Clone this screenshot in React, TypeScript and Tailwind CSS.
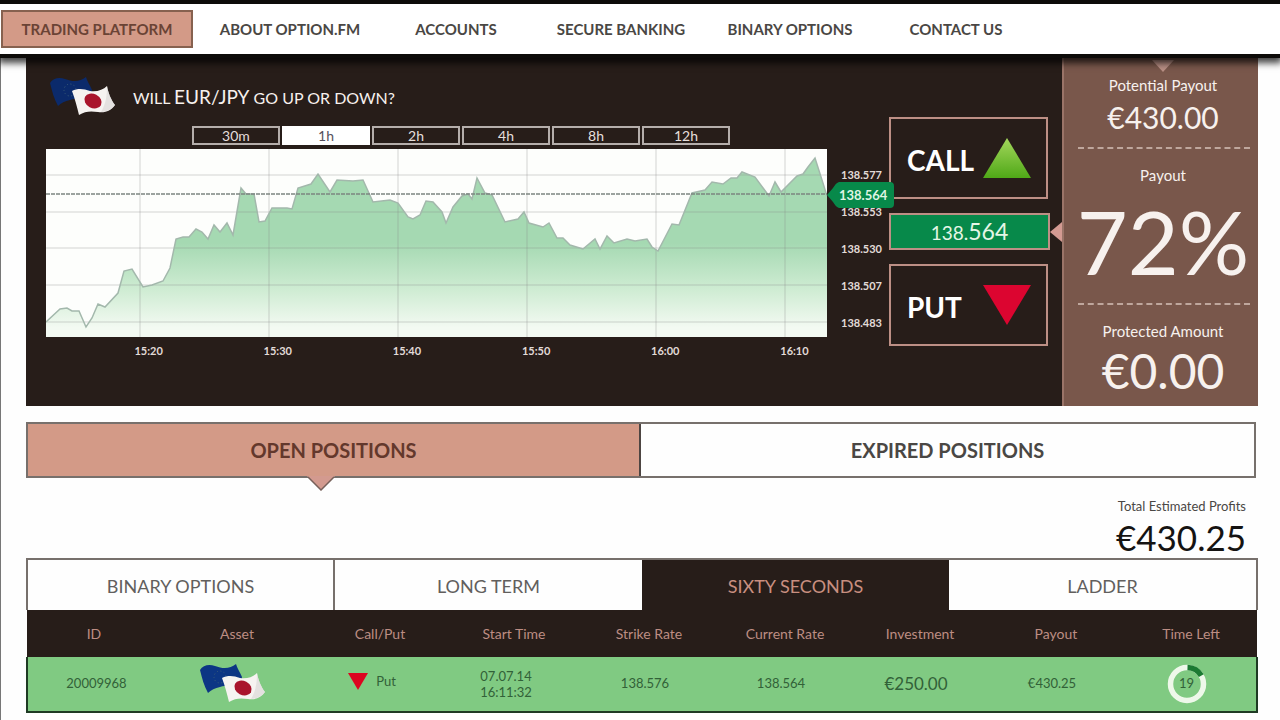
import React, { useState } from 'react';
import clsx from 'clsx';

const NAV_ITEMS = [
    { label: 'TRADING PLATFORM', className: 'w-[192px]' },
    { label: 'ABOUT OPTION.FM', className: 'w-[194px]' },
    { label: 'ACCOUNTS', className: 'w-[138px]' },
    { label: 'SECURE BANKING', className: 'w-[192px]' },
    { label: 'BINARY OPTIONS', className: 'w-[146px]' },
    { label: 'CONTACT US', className: 'w-[186px]' },
];

const TIMEFRAMES = ['30m', '1h', '2h', '4h', '8h', '12h'];
const TIME_LABELS = ['15:20', '15:30', '15:40', '15:50', '16:00', '16:10'];
const PRICE_LABELS = ['138.577', '138.553', '138.530', '138.507', '138.483'];
const TABLE_TABS = ['BINARY OPTIONS', 'LONG TERM', 'SIXTY SECONDS', 'LADDER'];

const COLUMNS = [
    { label: 'ID', className: 'w-[134px]' },
    { label: 'Asset', className: 'w-[152px]' },
    { label: 'Call/Put', className: 'w-[134px]' },
    { label: 'Start Time', className: 'w-[134px]' },
    { label: 'Strike Rate', className: 'w-[136px]' },
    { label: 'Current Rate', className: 'w-[136px]' },
    { label: 'Investment', className: 'w-[134px]' },
    { label: 'Payout', className: 'w-[138px]' },
    { label: 'Time Left', className: 'w-[132px]' },
];

const RATE_LINE =
    '0,173 14,160 21,159 26,162 33,162 40,178 46,169 52,155 59,158 72,144 78,122 86,120 97,138 106,136 117,132 124,119 ' +
    '130,90 137,88 143,88 150,80 156,83 162,90 168,76 174,83 181,74 187,86 195,39 200,45 208,45 213,73 219,72 226,59 ' +
    '241,59 246,60 252,39 265,35 272,25 284,43 291,31 307,32 317,31 322,42 327,53 344,51 352,54 362,68 367,70 374,66 ' +
    '380,52 387,53 396,63 400,74 407,58 416,47 422,45 426,50 431,29 439,44 446,46 459,73 472,70 478,63 483,74 497,78 ' +
    '503,74 511,89 517,89 524,96 537,100 549,90 554,100 561,87 568,94 581,90 589,92 601,90 606,98 612,102 626,75 ' +
    '633,76 646,44 659,41 666,33 677,35 685,29 691,29 696,23 709,28 723,47 729,33 735,43 751,27 757,25 762,18 769,9 ' +
    '776,31 781,47';

const FlagPair: React.FC<{ dim?: boolean }> = ({ dim = false }) => (
    <svg width="66" height="40" viewBox="0 0 66 40" aria-hidden="true">
        <path
            d="M0 6C3 1 9 0 15 2C23 5 30 5 36 0C37 4 40 8 42 13L40 23C33 21 26 21 20 23C15 24 11 26 8 29C4 22 2 14 0 6Z"
            fill={dim ? '#0b2a6b' : '#0c3684'}
        />
        <circle cx="20" cy="13" r="6" fill="none" stroke="#3d5f78" strokeWidth="1" strokeDasharray="1 2.5" />
        <path
            d="M22 14C28 11 34 12 40 14C47 15 53 13 57 9C58 15 61 23 65 28C61 34 55 36 48 35C41 34 35 34 29 38C27 30 25 22 22 14Z"
            fill="#f6f3f1"
        />
        <path d="M57 9C58 15 61 23 65 28C61 33 56 35 51 35C56 27 57 18 57 9Z" fill="#d9d6d6" opacity="0.6" />
        <ellipse cx="43" cy="24" rx="9" ry="7" transform="rotate(28 43 24)" fill="#a9142c" />
    </svg>
);

const RateChart = () => (
    <svg className="block h-[188px] w-full bg-[#fdfefc]" viewBox="0 0 781 188" preserveAspectRatio="none" aria-label="EUR/JPY rate">
        <defs>
            <linearGradient id="area" x1="0" y1="0" x2="0" y2="188" gradientUnits="userSpaceOnUse">
                <stop offset="0.5" stopColor="#a5d9b2" />
                <stop offset="0.75" stopColor="#cfecd3" />
                <stop offset="0.95" stopColor="#f3faf2" />
            </linearGradient>
        </defs>
        <polygon points={`0,188 ${RATE_LINE} 781,188`} fill="url(#area)" />
        {[26, 63, 99, 136, 173].map((y) => (
            <line key={y} x1="0" x2="781" y1={y} y2={y} stroke="#808080" strokeOpacity="0.17" strokeWidth="2" />
        ))}
        {[94, 223, 352, 481, 610, 739].map((x) => (
            <line key={x} x1={x} x2={x} y1="0" y2="188" stroke="#808080" strokeOpacity="0.17" strokeWidth="2" />
        ))}
        <polyline points={RATE_LINE} fill="none" stroke="#a3b8ac" strokeWidth="1.5" />
        <line x1="0" x2="781" y1="45" y2="45" stroke="#7c8580" strokeWidth="1.5" strokeDasharray="4 1" />
    </svg>
);

const Timer = () => (
    <span className="relative inline-flex size-10 items-center justify-center align-middle">
        <svg className="absolute inset-0" width="40" height="40" viewBox="0 0 40 40" aria-hidden="true">
            <circle cx="20" cy="20" r="16.5" fill="none" stroke="#eef8ea" strokeWidth="5.5" />
            <path d="M20.5 3.5A16.5 16.5 0 0 1 34.3 11.7" fill="none" stroke="#1c7a33" strokeWidth="5.5" />
        </svg>
        <span className="relative text-[13px]">19</span>
    </span>
);

const Divider = () => <div className="mr-2 ml-2.5 border-t-2 border-dashed border-[#bfa79d]" />;

export default function App() {
    const [timeframe, setTimeframe] = useState('1h');
    const [tab, setTab] = useState('SIXTY SECONDS');

    return (
        <div className="min-h-screen bg-[#fefefe] font-['Lato',sans-serif] text-[#4a4744]">
            <header className="relative z-10 border-t-4 border-b-4 border-[#0d0b09] bg-white shadow-[0_3px_7px_2px_rgba(0,0,0,0.75)]">
                <nav className="flex h-[50px] items-center pl-px">
                    {NAV_ITEMS.map((item, i) => (
                        <a
                            key={item.label}
                            href="#"
                            className={clsx(
                                'flex h-[38px] items-center justify-center text-[15px] font-bold whitespace-nowrap',
                                item.className,
                                i === 0 && 'border-2 border-[#86614f] bg-[#d39a87] text-[#6a4335]'
                            )}
                        >
                            {item.label}
                        </a>
                    ))}
                </nav>
            </header>

            <main className="border-l border-[#777] pr-[22px] pb-2 pl-[25px]">
                <section className="flex h-[348px] bg-[#271d19] text-[#f7f1ee]">
                    <div className="flex min-w-0 flex-1 pl-5">
                        <div className="min-w-0 flex-1">
                            <div className="mt-[19px] flex h-10 items-center gap-[17px] pl-1">
                                <FlagPair dim />
                                <h1 className="text-[16px] leading-6">
                                    WILL <span className="text-[19px]">EUR/JPY</span> GO UP OR DOWN?
                                </h1>
                            </div>
                            <div className="mt-[9px] flex gap-0.5 pl-[146px]">
                                {TIMEFRAMES.map((t) => (
                                    <button
                                        key={t}
                                        type="button"
                                        onClick={() => setTimeframe(t)}
                                        className={clsx(
                                            'h-[19px] w-[88px] border-2 text-[14px] leading-[15px]',
                                            t === timeframe
                                                ? 'border-white bg-white text-[#55505c]'
                                                : 'border-[#b5aeab] text-[#e6dfdc]'
                                        )}
                                    >
                                        {t}
                                    </button>
                                ))}
                            </div>
                            <div className="mt-1 flex">
                                <div className="min-w-0 flex-1">
                                    <RateChart />
                                </div>
                                <div className="relative w-[62px] pt-[7px] pl-3.5 text-[11px] font-bold text-[#e2dbd8]">
                                    {PRICE_LABELS.map((p) => (
                                        <div key={p} className="h-[37px] leading-[37px]">{p}</div>
                                    ))}
                                    <div className="absolute top-[33px] left-0 z-10 flex h-[26px] w-[67px]">
                                        <svg width="12" height="26" viewBox="0 0 12 26" aria-hidden="true">
                                            <path d="M12 0C9 1 8 3 6 6L0 13L6 20C8 23 9 25 12 26Z" fill="#07894a" />
                                        </svg>
                                        <span className="flex-1 rounded-r bg-[#07894a] text-[13px] leading-[26px] text-[#dff5e2]">
                                            138.564
                                        </span>
                                    </div>
                                </div>
                            </div>
                            <div className="flex pr-[30px] pl-[38px] text-center text-[11px] leading-5 font-bold text-[#e2dbd8]">
                                {TIME_LABELS.map((t) => (
                                    <span key={t} className="flex-1">{t}</span>
                                ))}
                            </div>
                        </div>

                        <div className="flex w-[173px] flex-col gap-3.5 pt-[59px] pr-3">
                            <button type="button" className="mr-0.5 flex h-[82px] items-center justify-between border-2 border-[#bd8f85] pr-3.5 pl-4 text-[28px] font-bold text-white">
                                <span className="pt-1">CALL</span>
                                <svg width="50" height="42" viewBox="0 0 50 42" aria-hidden="true">
                                    <defs>
                                        <linearGradient id="up" x1="0" y1="0" x2="0" y2="1">
                                            <stop offset="0" stopColor="#a4d75c" />
                                            <stop offset="1" stopColor="#4fa817" />
                                        </linearGradient>
                                    </defs>
                                    <path d="M25 1L49 41H1Z" fill="url(#up)" />
                                </svg>
                            </button>
                            <div className="relative h-[37px] border-2 border-[#bd8f85] bg-[#07894a] text-center text-[23px] leading-[33px] text-[#e4f6e6]">
                                <span className="text-[19px]">138.</span>564
                                <svg className="absolute top-[7px] -right-3.5" width="12" height="20" viewBox="0 0 12 20" aria-hidden="true">
                                    <path d="M12 0V20L0 10Z" fill="#d39a92" />
                                </svg>
                            </div>
                            <button type="button" className="mr-0.5 flex h-[82px] items-center justify-between border-2 border-[#bd8f85] pr-3.5 pl-4 text-[28px] font-bold text-white">
                                <span className="pt-1">PUT</span>
                                <svg width="50" height="42" viewBox="0 0 50 42" aria-hidden="true">
                                    <path d="M25 41L49 1H1Z" fill="#dc0530" />
                                </svg>
                            </button>
                        </div>
                    </div>

                    <aside className="w-[196px] shrink-0 border-l-2 border-[#9a7468] bg-[#79574b] pl-1 text-center">
                        <svg className="mx-auto mt-0.5" width="22" height="12" viewBox="0 0 22 12" aria-hidden="true">
                            <path d="M0 0H22L11 12Z" fill="#b98f85" />
                        </svg>
                        <div className="mt-[3px] text-[15px] leading-5">Potential Payout</div>
                        <div className="h-[52px] pt-1 text-[30px] leading-9">€430.00</div>
                        <Divider />
                        <div className="mt-4 text-[15px] leading-5">Payout</div>
                        <div className="mt-3 h-[106px] text-[88px] leading-[88px]">72%</div>
                        <Divider />
                        <div className="mt-4 text-[15px] leading-5">Protected Amount</div>
                        <div className="text-[48px] leading-[60px]">€0.00</div>
                    </aside>
                </section>

                <div className="mt-4 mr-0.5 grid h-14 grid-cols-2 border-2 border-[#77706c] text-[20px] font-bold">
                    <button type="button" className="relative border-r-2 border-[#4d4542] bg-[#d39a87] text-[#63382c]">
                        OPEN POSITIONS
                        <svg className="absolute top-full left-[279px]" width="28" height="15" viewBox="0 0 28 15" aria-hidden="true">
                            <path d="M0 0H28L14 14Z" fill="#d39a8f" />
                            <path d="M1 1L14 14L27 1" fill="none" stroke="#77605a" strokeWidth="1.5" />
                        </svg>
                    </button>
                    <button type="button">EXPIRED POSITIONS</button>
                </div>

                <div className="flex h-20 flex-col items-end pt-[18px] pr-3">
                    <div className="text-[13px] leading-5">Total Estimated Profits</div>
                    <div className="text-[35px] leading-[42px] text-[#151312]">€430.25</div>
                </div>

                <div className="grid h-[52px] grid-cols-4 border-2 border-b-0 border-[#77706c] text-[18px]">
                    {TABLE_TABS.map((t, i) => (
                        <button
                            key={t}
                            type="button"
                            onClick={() => setTab(t)}
                            className={clsx(
                                'pt-0.5',
                                t === tab ? 'bg-[#271d19] text-[#c98f80]' : 'text-[#625f5d]',
                                i === 0 && 'border-r-2 border-[#77706c]'
                            )}
                        >
                            {t}
                        </button>
                    ))}
                </div>
                <table className="w-full table-fixed border-collapse text-center text-[13px] text-[#326138]">
                    <thead>
                        <tr className="h-[47px] bg-[#271d19] text-[14px] text-[#bd8d83]">
                            {COLUMNS.map((c) => (
                                <th key={c.label} className={clsx('p-0 font-normal', c.className)}>{c.label}</th>
                            ))}
                        </tr>
                    </thead>
                    <tbody>
                        <tr className="h-[55px] border-2 border-t-0 border-[#1f3a24] bg-[#80ca82]">
                            <td className="pl-1">20009968</td>
                            <td className="pr-2"><span className="inline-block align-middle"><FlagPair /></span></td>
                            <td className="pr-4">
                                <span className="inline-flex items-center gap-2">
                                    <svg width="20" height="17" viewBox="0 0 20 17" aria-hidden="true">
                                        <path d="M0 0H20L10 17Z" fill="#dc0520" />
                                    </svg>
                                    <span className="text-[13px]">Put</span>
                                </span>
                            </td>
                            <td className="pr-4 leading-4">07.07.14<br />16:11:32</td>
                            <td className="pr-2">138.576</td>
                            <td className="pr-2">138.564</td>
                            <td className="pr-2 text-[17px]">€250.00</td>
                            <td className="pr-2">€430.25</td>
                            <td className="pr-2"><Timer /></td>
                        </tr>
                    </tbody>
                </table>
            </main>
        </div>
    );
}
